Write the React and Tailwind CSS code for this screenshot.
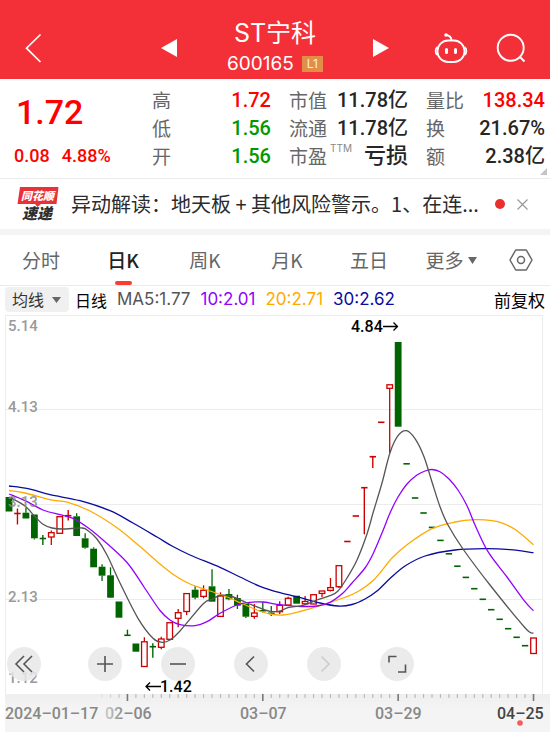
import { useState } from 'react';

const stats = [
    [
        { label: '高', value: '1.72', color: 'text-[#ff0000]' },
        { label: '低', value: '1.56', color: 'text-[#009900]' },
        { label: '开', value: '1.56', color: 'text-[#009900]' },
    ],
    [
        { label: '市值', value: '11.78亿', color: 'text-[#262626]' },
        { label: '流通', value: '11.78亿', color: 'text-[#262626]' },
        { label: '市盈', sup: 'TTM', value: '亏损', color: 'text-[#262626]' },
    ],
    [
        { label: '量比', value: '138.34', color: 'text-[#ff0000]' },
        { label: '换', value: '21.67%', color: 'text-[#262626]' },
        { label: '额', value: '2.38亿', color: 'text-[#262626]' },
    ],
];

const tabs = ['分时', '日K', '周K', '月K', '五日'];

const UP = '#cc0000';
const DOWN = '#006400';

// [kind, body top, body bottom, high, low] — u: hollow red, d: solid green
const candles = [
    ['d', 497, 511.5, 497, 511.5],
    ['u', 513.5, 513.5, 508.5, 524.5],
    ['d', 512.7, 518.5, 507.5, 518.5],
    ['d', 514.5, 538.3, 514.5, 539.5],
    ['d', 538.5, 538.5, 535, 545],
    ['u', 532.7, 537, 530.5, 545],
    ['u', 516.7, 533.3, 516.7, 533.3],
    ['u', 515.7, 515.7, 510, 520.5],
    ['d', 516.3, 536, 513.3, 536],
    ['d', 538.3, 547.7, 533.3, 548.7],
    ['d', 548.7, 567.3, 547.3, 567.3],
    ['d', 566.7, 575.7, 564.3, 581],
    ['d', 575.3, 597.7, 567.3, 598],
    ['d', 601.5, 617.7, 601.5, 617.7],
    ['d', 635.3, 635.3, 629.7, 635.3],
    ['d', 643.5, 651.7, 643.5, 651.7],
    ['u', 641.8, 666.5, 637.3, 666.5],
    ['d', 646.7, 646.7, 643.3, 657.7],
    ['u', 639, 647.3, 636.7, 649.3],
    ['u', 622.7, 639.3, 622.7, 639.3],
    ['u', 612.7, 618.3, 609, 627.3],
    ['u', 593.6, 611.5, 593.6, 615],
    ['d', 589.7, 597.7, 586.3, 599.3],
    ['u', 590.3, 596.4, 585.3, 598.3],
    ['d', 586.3, 601.7, 569.3, 601.7],
    ['u', 596, 616.4, 592.3, 616.4],
    ['d', 594, 599.3, 589, 600.3],
    ['d', 598, 605.7, 594.7, 609],
    ['d', 604, 616.7, 604, 618],
    ['u', 613, 616.4, 604, 618.7],
    ['d', 610, 611.5, 602.3, 612.5],
    ['d', 612.5, 614, 606, 616],
    ['u', 605.3, 611.7, 601.3, 614],
    ['u', 598.3, 605, 596.7, 606],
    ['d', 595.7, 603.7, 595.7, 603.7],
    ['u', 601.5, 603.8, 596, 605],
    ['u', 594.7, 604, 594.7, 604],
    ['u', 591, 593.4, 591, 597.3],
    ['u', 587.6, 590.4, 578, 591.5],
    ['u', 565.7, 586.7, 565.7, 588],
    ['u', 541.5, 541.5, 541.5, 541.5],
    ['u', 516, 516, 516, 516],
    ['u', 487.7, 487.7, 487.7, 534.3],
    ['u', 456.7, 456.7, 456.7, 468],
    ['u', 422.3, 422.3, 422.3, 422.3],
    ['u', 384.8, 388.3, 384.8, 452.7],
    ['d', 342, 426.7, 342, 426.7],
    ['d', 463.8, 463.8, 463.8, 463.8],
    ['d', 498, 498, 498, 498],
    ['d', 513, 513, 513, 513],
    ['d', 527.4, 527.4, 527.4, 527.4],
    ['d', 540.4, 540.4, 540.4, 540.4],
    ['d', 553.8, 553.8, 553.8, 553.8],
    ['d', 566.2, 566.2, 566.2, 566.2],
    ['d', 577.4, 577.4, 577.4, 577.4],
    ['d', 588.7, 588.7, 588.7, 588.7],
    ['d', 599.3, 599.3, 599.3, 599.3],
    ['d', 609.7, 609.7, 609.7, 609.7],
    ['d', 619.3, 619.3, 619.3, 619.3],
    ['d', 628.7, 628.7, 628.7, 628.7],
    ['d', 637.3, 637.3, 637.3, 637.3],
    ['d', 645.7, 645.7, 645.7, 645.7],
    ['u', 638, 653.5, 638, 653.5],
];

const averages = [
    {
        name: 'MA30',
        color: '#0b0b9e',
        points: [[9, 486], [28, 488.7], [50, 494.7], [80, 500.7], [110, 510.7], [133, 523], [157, 537], [172, 546], [190, 555], [220, 567.3], [240, 577], [260, 586.3], [280, 592.7], [303, 598.3], [320, 603], [338, 606], [352, 604.5], [365, 599], [377, 591], [390, 578.5], [405, 566], [425, 556], [455, 550], [485, 548.7], [510, 549.7], [533.5, 552.7]],
    },
    {
        name: 'MA20',
        color: '#ffaa00',
        points: [[9, 490.5], [25, 493], [50, 499.7], [68, 502.3], [90, 511], [117, 527.7], [140, 546.5], [160, 564], [174, 575], [190, 584], [210, 591], [227, 597], [243, 604], [257, 610], [270, 614], [283, 615], [300, 611.5], [320, 605.7], [343, 598], [358, 591.5], [375, 578.7], [392, 558], [408, 544], [432, 528.7], [455, 522], [475, 519.7], [492, 520.6], [503, 523.3], [516, 530], [533.5, 544.7]],
    },
    {
        name: 'MA10',
        color: '#9400ff',
        points: [[9, 494], [25, 500.7], [43, 510], [60, 514.7], [73, 518.3], [88, 527.7], [103, 540], [127, 562.5], [144, 587], [160, 610.5], [170, 620], [180, 624.7], [195, 625.7], [207, 621.7], [220, 613.3], [237, 605], [250, 602.3], [263, 602], [277, 604.3], [297, 606.3], [317, 606], [330, 602.3], [343, 593], [352, 583], [365, 568], [373, 554], [382, 533], [390, 513], [398, 497], [407, 484], [417, 475], [425, 471], [432, 469.5], [440, 471.7], [449, 479], [458, 490], [467, 505.7], [475, 525], [488, 551.7], [507, 577], [525, 601.7], [533.5, 610.7]],
    },
    {
        name: 'MA5',
        color: '#555555',
        points: [[9, 497], [25, 506], [35, 516.7], [43, 524.3], [52, 528], [63, 529], [82, 528], [88, 530.7], [97, 539], [107, 555], [120, 583], [138, 618.3], [153, 638.3], [162, 642.3], [170, 640], [180, 631], [203, 604], [212, 599.3], [220, 595.5], [230, 596], [242, 600.7], [253, 605.3], [270, 611.3], [280, 611], [288, 607.7], [303, 605.3], [317, 600], [330, 595.7], [338, 591], [347, 578], [357, 560], [367, 534], [373, 513], [382, 483], [390, 452.7], [398, 435.7], [406.5, 430.7], [415.5, 439.3], [424, 456.7], [432, 482], [440, 506.7], [448, 525], [463, 549], [490, 585], [525, 627.7], [533.5, 633.3]],
    },
];

const candleX = (i) => 9 + i * 8.46;

// Catmull-Rom through the points, written as cubic beziers
const smooth = (pts) => {
    let d = `M${pts[0][0]} ${pts[0][1]}`;
    for (let i = 0; i < pts.length - 1; i++) {
        const p0 = pts[i - 1] || pts[i];
        const p1 = pts[i];
        const p2 = pts[i + 1];
        const p3 = pts[i + 2] || p2;
        d += `C${p1[0] + (p2[0] - p0[0]) / 6} ${p1[1] + (p2[1] - p0[1]) / 6} ${p2[0] - (p3[0] - p1[0]) / 6} ${p2[1] - (p3[1] - p1[1]) / 6} ${p2[0]} ${p2[1]}`;
    }
    return d;
};

const Candle = ({ index, data }) => {
    const [kind, top, bottom, high, low] = data;
    const x = candleX(index);
    const color = kind === 'u' ? UP : DOWN;

    if (top === bottom) {
        return (
            <g stroke={color} strokeWidth="1.4">
                <line x1={x - 3.2} x2={x + 3.2} y1={top} y2={top} strokeWidth="1.6" />
                {high !== low && <line x1={x} x2={x} y1={high} y2={low} />}
            </g>
        );
    }
    return (
        <g stroke={color} strokeWidth="1.3">
            {high < top && <line x1={x} x2={x} y1={high} y2={top} />}
            {low > bottom && <line x1={x} x2={x} y1={bottom} y2={low} />}
            {kind === 'u' ? (
                <rect x={x - 2.8} y={top} width="5.6" height={bottom - top} fill="none" />
            ) : (
                <rect x={x - 3.4} y={top} width="6.8" height={bottom - top} fill={color} stroke="none" />
            )}
        </g>
    );
};

const Chart = () => (
    <svg viewBox="0 315 550 417" className="block w-full font-['Roboto','Inter',sans-serif]" role="img" aria-label="日K">
        <defs>
            <linearGradient id="axis" x1="0" y1="0" x2="0" y2="1">
                <stop offset="0" stopColor="#eeeeee" />
                <stop offset="0.35" stopColor="#f4f4f4" />
                <stop offset="1" stopColor="#f4f4f4" />
            </linearGradient>
            <linearGradient id="fade" gradientUnits="userSpaceOnUse" x1="100" y1="0" x2="124" y2="0">
                <stop offset="0" stopColor="#dddddd" />
                <stop offset="1" stopColor="#888888" />
            </linearGradient>
        </defs>
        <rect x="5" y="694" width="545" height="38" fill="url(#axis)" />
        <g stroke="#ececec">
            <line x1="5" x2="543" y1="315.5" y2="315.5" />
            <line x1="5" x2="543" y1="409.5" y2="409.5" />
            <line x1="5" x2="543" y1="504.5" y2="504.5" />
            <line x1="5" x2="543" y1="599.5" y2="599.5" />
            <line x1="5.5" x2="5.5" y1="315" y2="694" />
            <line x1="542.5" x2="542.5" y1="315" y2="694" />
        </g>

        {candles.map((c, i) => (
            <Candle key={i} index={i} data={c} />
        ))}
        {averages.map((a) => (
            <path key={a.name} d={smooth(a.points)} fill="none" stroke={a.color} strokeWidth="1.3" />
        ))}

        <g fontSize="15" fontWeight="500" fill="#8c8c8c" fillOpacity="0.9">
            <text x="8" y="331">5.14</text>
            <text x="8" y="412">4.13</text>
            <text x="8" y="507">3.13</text>
            <text x="8" y="602">2.13</text>
            <text x="8" y="683">1.12</text>
        </g>
        <g fontSize="16" fontWeight="500" fill="#000000">
            <text x="351" y="332">4.84</text>
            <text x="160" y="692">1.42</text>
        </g>
        <g stroke="#000000" strokeWidth="1.3" fill="none">
            <path d="M383 326.5H397.500M393.500 322.500L397.500 326.500L393.500 330.500" />
            <path d="M161 686.500H146M150 682.500L146 686.500L150 690.500" />
        </g>

        {candles.map((_, i) => {
            const major = i === 14 || i === 30 || i === 46 || i === 62;
            if (i < 11) return null;
            return (
                <line
                    key={i}
                    x1={candleX(i)}
                    x2={candleX(i)}
                    y1="694"
                    y2={major ? 701 : 698}
                    stroke={major ? '#777777' : '#bbbbbb'}
                    strokeOpacity={i < 14 ? (i - 10) / 4 : 1}
                    strokeWidth={major ? 1.6 : 1.2}
                />
            );
        })}
        <g fontSize="16" fontWeight="500" fill="#888888">
            <text x="5" y="719">2024–01–17</text>
            <text x="105" y="719" fill="url(#fade)">02–06</text>
            <text x="240" y="719">03–07</text>
            <text x="375" y="719">03–29</text>
            <text x="497" y="719" fill="#444444">04–25</text>
        </g>
        <circle cx="520" cy="723" r="2.8" fill="#f75a5a" />
    </svg>
);

const RoundButton = ({ label, disabled, children }) => (
    <button
        type="button"
        aria-label={label}
        disabled={disabled}
        className="flex size-[34px] items-center justify-center rounded-full bg-[#e8e8e8]/85 text-[#555555] disabled:text-[#cccccc]"
    >
        <svg viewBox="0 0 34 34" className="size-[34px]" fill="none" stroke="currentColor" strokeWidth="1.6">
            {children}
        </svg>
    </button>
);

const Header = () => (
    <header className="grid grid-cols-[1fr_auto_1fr] items-center bg-[#f33038] pt-4 text-white">
        <a href="#back" aria-label="返回" className="ml-6 w-5">
            <svg viewBox="0 0 20 30" className="h-[30px] w-5" fill="none" stroke="currentColor" strokeWidth="1.7">
                <path d="M16.500 1.500L2.500 15.200L16.500 29" />
            </svg>
        </a>
        <div className="flex w-[228px] items-center justify-between">
            <button type="button" aria-label="上一只">
                <svg viewBox="0 0 16 18" className="h-[18px] w-4" fill="currentColor">
                    <path d="M16 0V18L0 9Z" />
                </svg>
            </button>
            <div className="flex flex-col items-center">
                <h1 className="pt-px font-['Inter','Noto_Sans_CJK_SC',sans-serif] text-[25px] leading-8">ST宁科</h1>
                <div className="flex items-center gap-2">
                    <span className="font-['Inter',sans-serif] text-[19px] leading-[30px]">600165</span>
                    <span className="bg-[#e28d48] px-[5px] font-['Inter',sans-serif] text-xs leading-4 text-[#fff0dc]">L1</span>
                </div>
            </div>
            <button type="button" aria-label="下一只">
                <svg viewBox="0 0 16 18" className="h-[18px] w-4" fill="currentColor">
                    <path d="M0 0V18L16 9Z" />
                </svg>
            </button>
        </div>
        <div className="flex items-center justify-end gap-7 pr-6">
            <button type="button" aria-label="助手">
                <svg viewBox="0 0 34 32" className="h-8 w-[34px]" fill="none" stroke="currentColor" strokeWidth="1.8">
                    <rect x="3.500" y="8.500" width="27" height="21.500" rx="10.500" />
                    <path d="M3.500 15C1 16.500 1 21.500 3.500 23M30.500 15C33 16.500 33 21.500 30.500 23" />
                    <path d="M17.500 8.500C17.500 5 15.500 3.500 12 3" />
                    <circle cx="12" cy="3" r="1.800" fill="currentColor" stroke="none" />
                    <path d="M12.500 17.500V20.500M21.500 17.500V20.500" strokeWidth="3" strokeLinecap="round" />
                </svg>
            </button>
            <button type="button" aria-label="搜索">
                <svg viewBox="0 0 30 30" className="size-[30px]" fill="none" stroke="currentColor" strokeWidth="1.9">
                    <circle cx="14.700" cy="14.800" r="13" />
                    <path d="M23.500 23.500L28.500 28.500" />
                </svg>
            </button>
        </div>
    </header>
);

const Quote = () => (
    <section className="relative flex items-start border-b border-[#ebebeb] pt-[7px] pr-[5px] pb-1">
        <div className="min-w-0 flex-1 pl-[14px] font-['Roboto',sans-serif] text-[#ff0000]">
            <div className="pl-[2px] text-[34px] leading-[52px] font-medium">1.72</div>
            <div className="flex gap-3 text-lg leading-9 font-medium">
                <span>0.08</span>
                <span>4.88%</span>
            </div>
        </div>
        <div className="flex gap-[18px]">
            {stats.map((column, i) => (
                <dl key={i} className="w-[119px]">
                    {column.map((item) => (
                        <div key={item.label} className="flex h-7 items-center justify-between whitespace-nowrap">
                            <dt className="flex text-[19px] leading-7 text-[#666666]">
                                {item.label}
                                {item.sup && <sup className="top-0 pl-[3px] font-['Inter',sans-serif] text-[10px] leading-3 text-[#888888]">{item.sup}</sup>}
                            </dt>
                            <dd className={`font-['Roboto','Noto_Sans_CJK_SC',sans-serif] leading-7 font-medium ${item.sup ? 'text-[22px]' : 'text-xl'} ${item.color}`}>{item.value}</dd>
                        </div>
                    ))}
                </dl>
            ))}
        </div>
        <svg viewBox="0 0 7 7" className="absolute right-[3px] bottom-[3px] size-[7px]" fill="#c4c4c4">
            <path d="M7 0V7H0Z" />
        </svg>
    </section>
);

const News = () => (
    <section className="flex items-center border-b-[6px] border-[#f4f4f4] pr-[22px] pl-[17px]">
        <svg viewBox="0 0 43 36" className="h-9 w-[43px] shrink-0 font-['Noto_Sans_CJK_SC',sans-serif]" fontStyle="italic" fontWeight="900">
            <path d="M3 1H41.500L39.500 18H24L20.500 21L18 18H0.500Z" fill="#e8323a" />
            <text x="4" y="14" fontSize="11" fill="#ffffff">同花顺</text>
            <text x="5" y="33" fontSize="15" fill="#2e2e2e">速递</text>
        </svg>
        <a href="#news" className="ml-[11px] min-w-0 flex-1 truncate text-xl leading-[50px] text-[#2b2b2b]">
            异动解读：地天板 + 其他风险警示。1、在连...
        </a>
        <span className="mr-3 size-[10px] rounded-full bg-[#e8302f]"></span>
        <button type="button" aria-label="关闭">
            <svg viewBox="0 0 11 11" className="size-[11px]" stroke="#999999" strokeWidth="1.200">
                <path d="M0.500 0.500L10.500 10.500M10.500 0.500L0.500 10.500" />
            </svg>
        </button>
    </section>
);

export default function App() {
    const [active, setActive] = useState('日K');

    return (
        <div className="min-h-screen w-full overflow-hidden bg-white font-['Noto_Sans_CJK_SC',sans-serif]">
            <Header />
            <Quote />
            <News />

            <nav className="flex h-[51px] items-stretch border-b border-[#ebebeb]">
                {tabs.map((tab) => (
                    <button
                        key={tab}
                        type="button"
                        onClick={() => setActive(tab)}
                        className={`relative flex-1 text-[19px] ${active === tab ? 'font-medium text-[#222222]' : 'text-[#666666]'}`}
                    >
                        {tab}
                        {active === tab && <span className="absolute inset-x-0 bottom-0 mx-auto h-1 w-[17px] rounded-sm bg-[#ff3a30]"></span>}
                    </button>
                ))}
                <button type="button" className="flex flex-1 items-center justify-center gap-1 text-[19px] text-[#666666]">
                    更多
                    <svg viewBox="0 0 9 7" className="h-[7px] w-[9px]" fill="currentColor">
                        <path d="M0 0H9L4.500 7Z" />
                    </svg>
                </button>
                <button type="button" aria-label="设置" className="flex w-[58px] items-center justify-center">
                    <svg viewBox="0 0 24 22" className="h-[22px] w-6" fill="none" stroke="#666666" strokeWidth="1.500">
                        <path d="M6.700 1H17.300L23 11L17.300 21H6.700L1 11Z" strokeLinejoin="round" />
                        <circle cx="12" cy="11" r="3.500" />
                    </svg>
                </button>
            </nav>

            <div className="flex h-[29px] items-center pr-[5px] pb-[2px] pl-[5px] text-base whitespace-nowrap">
                <div className="relative">
                    <select aria-label="指标" className="block h-[25px] w-16 appearance-none rounded-sm bg-[#f0f0f0] pl-[7px] text-base leading-[25px] text-[#333333]">
                        <option>均线</option>
                    </select>
                    <svg viewBox="0 0 9 6" className="pointer-events-none absolute top-[10px] right-2 h-[6px] w-[9px]" fill="#666666">
                        <path d="M0 0H9L4.500 6Z" />
                    </svg>
                </div>
                <span className="ml-[6px] text-black">日线</span>
                <div className="ml-[10px] flex flex-1 gap-[10px] font-['Inter',sans-serif] text-[17px]">
                    <span className="text-[#555555]">MA5:1.77</span>
                    <span className="text-[#9400ff]">10:2.01</span>
                    <span className="text-[#ffaa00]">20:2.71</span>
                    <span className="text-[#0b0b9e]">30:2.62</span>
                </div>
                <span className="text-[17px] text-black">前复权</span>
            </div>

            <div className="relative">
                <Chart />
                <div className="absolute bottom-[51px] left-[7px] flex gap-[39px]">
                    <div className="mr-[8px] flex">
                        <RoundButton label="最早">
                            <path d="M17 9L9 17L17 25M25 9L17 17L25 25" />
                        </RoundButton>
                    </div>
                    <RoundButton label="放大">
                        <path d="M17 9V25M9 17H25" />
                    </RoundButton>
                    <RoundButton label="缩小">
                        <path d="M9 17H25" />
                    </RoundButton>
                    <RoundButton label="左移">
                        <path d="M20 9.500L12.500 17L20 24.500" />
                    </RoundButton>
                    <RoundButton label="右移" disabled>
                        <path d="M14.500 9.500L22 17L14.500 24.500" />
                    </RoundButton>
                    <RoundButton label="全屏">
                        <path d="M9 15.500V9.500H16.500M25.500 17.500V25H18" />
                    </RoundButton>
                </div>
            </div>
        </div>
    );
}
